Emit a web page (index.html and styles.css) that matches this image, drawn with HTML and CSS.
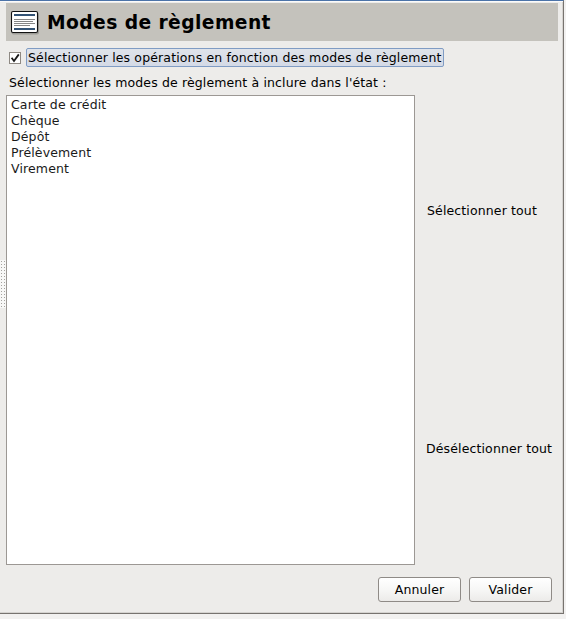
FILE: index.html
```
<!DOCTYPE html>
<html lang="fr">
<head>
<meta charset="utf-8">
<title>Modes de règlement</title>
<link rel="stylesheet" href="styles.css">
</head>
<body>
<main class="window">
  <div class="handle">
    <svg width="6" height="48" viewBox="0 0 6 48" shape-rendering="crispEdges">
      <defs><pattern id="dots" width="3" height="3" patternUnits="userSpaceOnUse"><rect width="3" height="3" fill="#f8f8f7"/><rect x="1" y="1" width="1" height="1" fill="#a5a3a0"/></pattern></defs>
      <rect width="6" height="48" fill="url(#dots)"/>
    </svg>
  </div>
  <section class="content">
    <header class="title-bar">
      <svg class="icon" width="30" height="26" viewBox="0 0 30 26">
        <rect x="1.5" y="3.5" width="27.5" height="22" rx="2" fill="#000" opacity=".2"/>
        <rect x="1.5" y="2.5" width="26" height="21" rx="1.5" fill="#fff" stroke="#111" stroke-width="1.1"/>
        <path d="M4 6h21M4 20h21" stroke="#335375" stroke-width="2"/>
        <path d="M4 10.5h21M4 12.5h19M4 14.5h21M4 16.5h16" stroke="#858585" stroke-width="1"/>
      </svg>
      <h1>Modes de règlement</h1>
    </header>
    <label class="option">
      <svg width="12" height="12" viewBox="0 0 12 12">
        <rect x=".5" y=".5" width="11" height="11" fill="#fff" stroke="#8e8983"/>
        <path d="M2.6 5.8L5 9L9.8 2.4" fill="none" stroke="#1a1a1a" stroke-width="1.8"/>
      </svg>
      <span class="focus">Sélectionner les opérations en fonction des modes de règlement</span>
    </label>
    <p class="hint">Sélectionner les modes de règlement à inclure dans l'état :</p>
    <div class="chooser">
      <ul class="list">
        <li>Carte de crédit</li>
        <li>Chèque</li>
        <li>Dépôt</li>
        <li>Prélèvement</li>
        <li>Virement</li>
      </ul>
      <div class="actions">
        <span class="select">Sélectionner tout</span>
        <span>Désélectionner tout</span>
      </div>
    </div>
    <footer class="buttons">
      <button>Annuler</button>
      <button>Valider</button>
    </footer>
  </section>
</main>
</body>
</html>
```
FILE: styles.css
```
* { box-sizing: border-box; }
body {
  margin: 0;
  height: 619px;
  overflow: hidden;
  background: #f2f1f0;
  font: 12.5px/16px "DejaVu Sans", sans-serif;
  letter-spacing: .13px;
  color: #000;
}
.window {
  display: flex;
  width: 564px;
  height: 614px;
  background: #edecea;
  border-top: 1px solid #4b73a8;
  border-right: 1px solid #77736f;
  border-bottom: 1px solid #77736f;
  box-shadow: inset 0 1px #fbfaf9, inset -1px -1px #d5d3d0;
}
.handle { display: flex; width: 6px; padding-top: 259px; }
.content { width: 552px; padding-top: 2px; }
.title-bar {
  display: flex;
  align-items: center;
  gap: 7px;
  height: 38px;
  padding-left: 4px;
  background: #c4c2bc;
}
h1 { margin: 0; padding-top: 1px; font-size: 18.7px; line-height: 24px; letter-spacing: .42px; font-weight: bold; white-space: nowrap; }
.option { display: flex; align-items: center; gap: 5px; height: 19px; margin-top: 7px; padding-left: 3px; }
.focus {
  width: 418px;
  height: 19px;
  padding-left: 1px;
  line-height: 18px;
  letter-spacing: .14px;
  white-space: nowrap;
  background: linear-gradient(#dfe3ea, #d4dae6);
  border: 1px solid #809cc4;
  border-radius: 2px;
}
.hint { margin: 7px 0 0 3px; height: 21px; line-height: 17px; }
.chooser { display: flex; height: 470px; }
.list {
  width: 409px;
  margin: 0;
  padding: 1px 4px;
  list-style: none;
  color: #1a1a1a;
  background: #fff;
  border: 1px solid #9c9894;
}
.actions { display: flex; flex-direction: column; width: 143px; padding: 108px 0 0 11px; gap: 222px; white-space: nowrap; }
.select { padding-left: 1px; }
.buttons { display: flex; justify-content: flex-end; gap: 8px; padding: 12px 6px 0 0; }
button {
  width: 83px;
  height: 25px;
  padding: 0;
  font: inherit;
  letter-spacing: inherit;
  color: #000;
  background: linear-gradient(#fff, #f7f7f6 50%, #ecebe9);
  border: 1px solid #8f8b87;
  border-radius: 3px;
}
```
